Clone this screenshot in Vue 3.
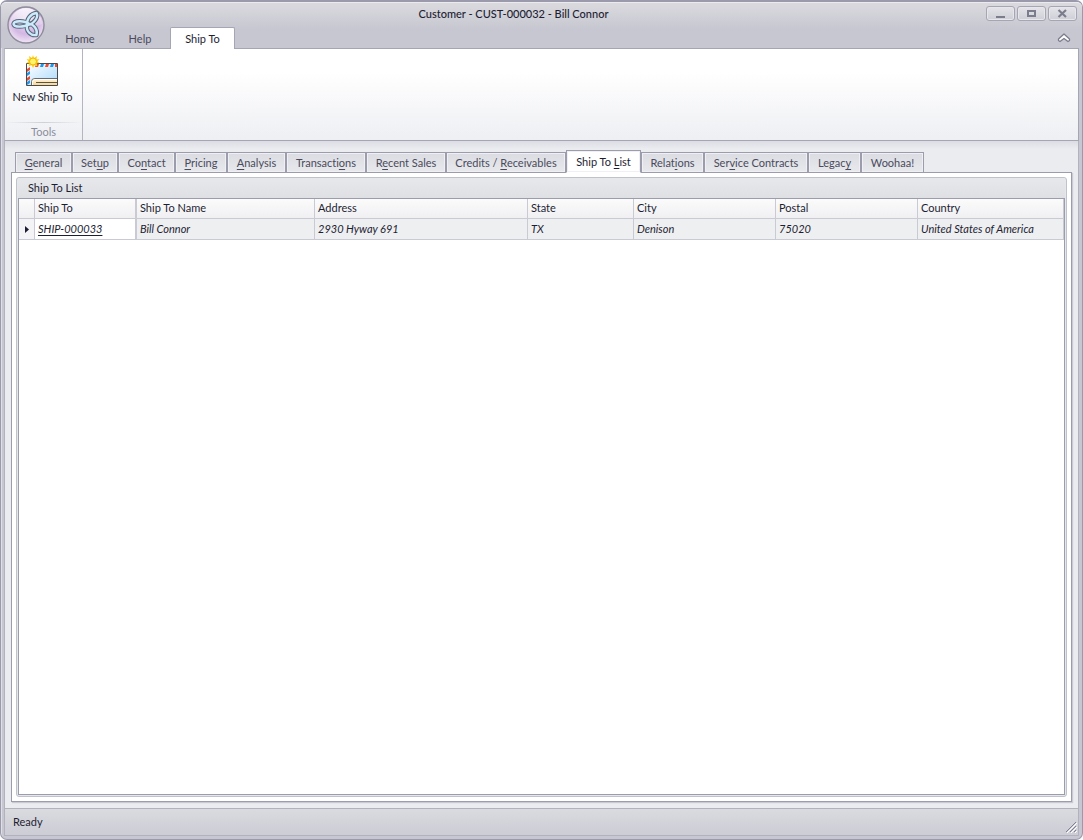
<script setup>
import { ref } from 'vue'

const ribbonTabs = ['Home', 'Help', 'Ship To']
const activeRibbon = ref('Ship To')

// Each page label is split around its underlined access key.
const pages = [
  ['', 'G', 'eneral'],
  ['Set', 'u', 'p'],
  ['Co', 'n', 'tact'],
  ['', 'P', 'ricing'],
  ['', 'A', 'nalysis'],
  ['Transacti', 'o', 'ns'],
  ['R', 'e', 'cent Sales'],
  ['Credits / ', 'R', 'eceivables'],
  ['Ship To ', 'L', 'ist'],
  ['Relat', 'i', 'ons'],
  ['Ser', 'v', 'ice Contracts'],
  ['Legac', 'y', ''],
  ['Woohaa!', '', '']
]
const activePage = ref(8)

const columns = ['Ship To Name', 'Address', 'State', 'City', 'Postal', 'Country']
const rows = [
  { id: 'SHIP-000033', cells: ['Bill Connor', '2930 Hyway 691', 'TX', 'Denison', '75020', 'United States of America'] }
]
</script>

<template>
  <div class="window">
    <header class="titlebar">
      <button class="orb" aria-label="Application menu">
        <svg width="38" height="38" viewBox="0 0 38 38">
          <defs>
            <radialGradient id="orbFill" cx="50%" cy="38%" r="62%">
              <stop offset="0" stop-color="#e9daf2" />
              <stop offset="0.6" stop-color="#d3b7e3" />
              <stop offset="1" stop-color="#f0e6f5" />
            </radialGradient>
            <linearGradient id="orbShine" x1="0" y1="0" x2="0" y2="1">
              <stop offset="0" stop-color="#fff" stop-opacity="0.85" />
              <stop offset="1" stop-color="#fff" stop-opacity="0.15" />
            </linearGradient>
          </defs>
          <circle cx="19" cy="19" r="18" fill="url(#orbFill)" stroke="#8f8c9c" stroke-width="1.4" />
          <path d="M3 18a16 16 0 0 1 32 0c-8 4-22 4-32 0z" fill="url(#orbShine)" />
          <g fill="none" stroke-linejoin="round">
            <g stroke="#56677a" stroke-width="4.4">
              <path d="M22 18C18 14.500 7 14 6.500 18C7 21.500 17 21.500 22 18z" />
              <path d="M20.500 19C19 13 24 7.500 29.500 7C32 11 27 18 20.500 19z" />
              <path d="M20.500 18C27 17 31 24 29.500 29C24 30 18 25 20.500 18z" />
            </g>
            <g stroke="#cdeafa" stroke-width="2.4">
              <path d="M22 18C18 14.500 7 14 6.500 18C7 21.500 17 21.500 22 18z" />
              <path d="M20.500 19C19 13 24 7.500 29.500 7C32 11 27 18 20.500 19z" />
              <path d="M20.500 18C27 17 31 24 29.500 29C24 30 18 25 20.500 18z" />
            </g>
          </g>
        </svg>
      </button>
      <div class="title-area">
        <div class="title-row">
          <h1>Customer - CUST-000032 - Bill Connor</h1>
          <div class="window-buttons">
            <button aria-label="Minimize">
              <svg width="11" height="9" viewBox="0 0 11 9"><path d="M1 7h9v2H1z" fill="#7b7d8c" /></svg>
            </button>
            <button aria-label="Maximize">
              <svg width="11" height="9" viewBox="0 0 11 9"><path d="M2 2h7v5H2z" fill="none" stroke="#7b7d8c" stroke-width="2" /></svg>
            </button>
            <button aria-label="Close">
              <svg width="11" height="9" viewBox="0 0 11 9"><path d="M1.500 1l7.500 7M9 1L1.500 8" fill="none" stroke="#7b7d8c" stroke-width="2.200" /></svg>
            </button>
          </div>
        </div>
        <nav class="ribbon-tabs">
          <button
            v-for="tab in ribbonTabs"
            :key="tab"
            :class="{ active: tab === activeRibbon }"
            @click="activeRibbon = tab"
          >{{ tab }}</button>
          <button class="collapse" aria-label="Collapse ribbon">
            <svg width="14" height="10" viewBox="0 0 14 10">
              <path d="M7 1L1.500 6v1.500L3 8.500L7 5.500L11 8.500L12.500 7.500V6z" fill="#fff" stroke="#7b7d8c" stroke-width="1.300" stroke-linejoin="round" />
            </svg>
          </button>
        </nav>
      </div>
    </header>

    <section class="ribbon">
      <div class="group">
        <button class="tool">
          <svg width="38" height="32" viewBox="1 0 38 32">
            <defs>
              <linearGradient id="paper" x1="0" y1="0" x2="1" y2="1">
                <stop offset="0" stop-color="#fff" />
                <stop offset="1" stop-color="#a9d9fa" />
              </linearGradient>
              <linearGradient id="card" x1="0" y1="0" x2="0" y2="1">
                <stop offset="0" stop-color="#fff6e0" />
                <stop offset="1" stop-color="#f8d592" />
              </linearGradient>
            </defs>
            <path d="M3.500 8.500h31v22h-31z" fill="url(#paper)" />
            <path d="M18 9h3l-1 3h-3zM28 9h3l-1 3h-3zM4 18l3-2v3l-3 2zM4 27l3-2v3l-3 2z" fill="#1c97f0" />
            <path d="M13 9h3l-1 3h-3zM23 9h3l-1 3h-3zM32 9h2v3h-2zM4 14l3-2v3l-3 2zM4 23l3-2v3l-3 2z" fill="#f04a2a" />
            <path d="M34 23.500H12q-3.500 0-3.500 3v4H34z" fill="url(#card)" />
            <path d="M34 23.500H12q-3.500 0-3.500 3v4" fill="none" stroke="#6b6b6b" />
            <path d="M34 24.500H12q-2.500 0-2.500 3v2.500" fill="none" stroke="#fff" />
            <path d="M13 27.500h21" stroke="#5c5542" />
            <path d="M3.500 8.500h31v22h-31z" fill="none" stroke="#4a4a4a" />
            <path d="M10 0l1 3 3-2-.500 3.500 3-.500-2 2.500 2 1.500-3 .500 1 3-3-1.500L10 13l-1.500-3-3 1.500 1-3-3-.500 2-1.500-2-2.500 3 .500L6 1l3 2z" fill="#ffcf16" />
            <circle cx="10" cy="6.500" r="3.500" fill="#fff36a" stroke="#f6b800" />
          </svg>
          <span>New Ship To</span>
        </button>
        <div class="group-name">Tools</div>
      </div>
    </section>

    <main class="workspace">
      <nav class="page-tabs">
        <button
          v-for="(page, i) in pages"
          :key="i"
          :class="{ active: i === activePage }"
          @click="activePage = i"
        >{{ page[0] }}<u v-if="page[1]">{{ page[1] }}</u>{{ page[2] }}</button>
      </nav>
      <div class="page">
        <section class="list-box">
          <h2>Ship To List</h2>
          <div class="grid-frame">
            <table>
              <colgroup>
                <col class="c-mark" /><col class="c-id" /><col class="c-name" /><col class="c-address" />
                <col class="c-state" /><col class="c-city" /><col class="c-postal" /><col />
              </colgroup>
              <thead>
                <tr>
                  <th></th>
                  <th class="pinned">Ship To</th>
                  <th v-for="column in columns" :key="column">{{ column }}</th>
                </tr>
              </thead>
              <tbody>
                <tr v-for="row in rows" :key="row.id">
                  <td class="mark">
                    <svg width="4" height="7" viewBox="0 0 4 7"><path d="M0 0l4 3.500L0 7z" fill="#1c1c30" /></svg>
                  </td>
                  <td class="pinned"><a href="#">{{ row.id }}</a></td>
                  <td v-for="cell in row.cells" :key="cell">{{ cell }}</td>
                </tr>
              </tbody>
            </table>
          </div>
        </section>
      </div>
    </main>

    <footer class="status">
      <span>Ready</span>
      <svg width="12" height="12" viewBox="0 0 12 12">
        <path d="M1 11L11 1M5 11l6-6M9 11l2-2" stroke="#fff" transform="translate(1 1)" />
        <path d="M1 11L11 1M5 11l6-6M9 11l2-2" stroke="#7f8092" />
      </svg>
    </footer>
  </div>
</template>

<style>
html,
body {
  margin: 0;
  background: #fff;
}
</style>

<style scoped>
* {
  box-sizing: border-box;
}

.window {
  display: flex;
  flex-direction: column;
  min-height: 100vh;
  padding: 0 3px 3px;
  border: 1px solid #9a9aac;
  border-top: 2px solid #9a9aac;
  border-radius: 7px;
  background: #c7c7d1;
  box-shadow: inset 1px 1px 0 #dfdfe6;
  color: #1e1e33;
  font: 11px/14px Lato, "Liberation Sans", sans-serif;
  font-variant-ligatures: none;
}

button {
  margin: 0;
  padding: 0;
  border: 0;
  background: none;
  color: inherit;
  font: inherit;
  font-variant-ligatures: none;
}

svg {
  display: block;
}

h1,
h2 {
  margin: 0;
  font: inherit;
}

.titlebar {
  display: flex;
  height: 46px;
  margin: 0 -3px;
  padding: 0 3px;
  border-top: 1px solid #ebebef;
  border-radius: 5px 5px 0 0;
  background: linear-gradient(#dadade, #c7c7d1 26px);
}

.orb {
  flex: none;
  width: 38px;
  height: 38px;
  margin: 3px 0 0 3px;
}

.title-area {
  display: flex;
  flex: 1;
  flex-direction: column;
}

.title-row {
  display: flex;
  height: 24px;
}

h1 {
  flex: 1;
  padding: 4px 4px 0 0;
  font-weight: 500;
  text-align: center;
}

.window-buttons {
  display: flex;
  gap: 2px;
  padding: 3px 2px 0 0;
}

.window-buttons button {
  display: flex;
  align-items: center;
  justify-content: center;
  width: 29px;
  height: 15px;
  border: 1px solid #a5a6b3;
  border-radius: 3px;
  background: linear-gradient(#e4e4e9, #cecfd7);
  box-shadow: inset 0 0 0 1px #e6e6eb;
}

.ribbon-tabs {
  display: flex;
  align-items: stretch;
  height: 22px;
  padding-left: 5px;
  color: #4a4a5c;
}

.ribbon-tabs button {
  min-width: 60px;
  padding: 4px 14px 0;
}

.ribbon-tabs .active {
  z-index: 1;
  height: 22px;
  min-width: 65px;
  margin-top: 1px;
  padding-top: 0;
  border: 1px solid #a5a6b3;
  border-bottom: 0;
  border-radius: 2px 2px 0 0;
  background: #fff;
  color: #1e1e33;
}

.ribbon-tabs .collapse {
  min-width: 14px;
  margin: 0 8px 0 auto;
  padding: 2px 0 0;
}

.ribbon {
  display: flex;
  height: 93px;
  border: 1px solid #a5a6b3;
  border-left-color: #b7b8c3;
  background: linear-gradient(#fff 25%, #eeeff3);
}

.group {
  display: flex;
  flex-direction: column;
  width: 78px;
  border-right: 1px solid #b4b5c0;
}

.tool {
  display: flex;
  flex: 1;
  flex-direction: column;
  align-items: center;
  gap: 3px;
  margin-right: 2px;
  padding-top: 6px;
}

.group-name {
  height: 19px;
  padding-top: 4px;
  background: linear-gradient(90deg, transparent, #cfd0d8, transparent) 0 1px / 100% 1px no-repeat;
  color: #8b8d9c;
  text-align: center;
}

.workspace {
  display: flex;
  flex: 1;
  flex-direction: column;
  padding: 9px 6px 6px;
  border: solid #b1b2be;
  border-width: 0 1px;
  background: linear-gradient(#dcdde3, #ebecf0 8px);
}

.page-tabs {
  z-index: 1;
  display: grid;
  grid-template-columns: 57px 46px 57px 52px 59px 80px 80px 120px 75px 63px 104px 53px 63px;
  align-items: end;
  height: 23px;
  margin-bottom: -1px;
  padding-left: 4px;
  color: #4a4a5c;
}

.page-tabs button {
  height: 21px;
  border: 1px solid #9b9dac;
  background: linear-gradient(#dadce1, #e8e9ed);
  box-shadow: inset 0 0 0 1px #f0f0f4;
  white-space: nowrap;
}

.page-tabs .active {
  height: 23px;
  border-bottom-color: #fff;
  background: #fff;
  color: #1e1e33;
}

u {
  text-underline-offset: 2px;
}

.page {
  display: flex;
  flex: 1;
  padding: 4px;
  border: 1px solid #9b9dac;
  background: #fff;
  box-shadow: 1px 1px 1px #c9cad3;
}

.list-box {
  display: flex;
  flex: 1;
  flex-direction: column;
  padding: 0 1px 1px;
  border: 1px solid #bfc1cb;
  border-radius: 3px;
  background: #e6e7ea;
}

h2 {
  height: 20px;
  padding: 3px 10px;
  background: linear-gradient(#e7e8eb, #dfe0e4);
}

.grid-frame {
  flex: 1;
  border: 1px solid #9b9dac;
  background: #fff;
}

table {
  width: 100%;
  border-collapse: separate;
  border-spacing: 0;
  table-layout: fixed;
}

.c-mark { width: 16px; }
.c-id { width: 102px; }
.c-name { width: 178px; }
.c-address { width: 213px; }
.c-state { width: 106px; }
.c-city,
.c-postal { width: 142px; }

th,
td {
  height: 21px;
  padding: 0 3px;
  border: solid #c9cad3;
  border-width: 0 1px 1px 0;
  font-weight: 400;
  text-align: left;
  white-space: nowrap;
}

th {
  height: 20px;
  padding-bottom: 2px;
  background: linear-gradient(#fbfbfb, #f0f0f3);
}

td {
  background: #eeeff1;
  font-style: italic;
}

.pinned {
  border-right-width: 2px;
}

td.pinned {
  background: #fff;
}

td.mark {
  padding: 0 6px;
  background: #f4f4f6;
}

a {
  color: inherit;
  text-underline-offset: 2px;
}

.status {
  display: flex;
  align-items: center;
  justify-content: space-between;
  height: 28px;
  padding: 0 0 0 8px;
  border: 1px solid #b1b2be;
  background: linear-gradient(#dadbdf, #cccdd5);
}

.status svg {
  align-self: flex-end;
  margin: 0 1px 2px 0;
}
</style>
